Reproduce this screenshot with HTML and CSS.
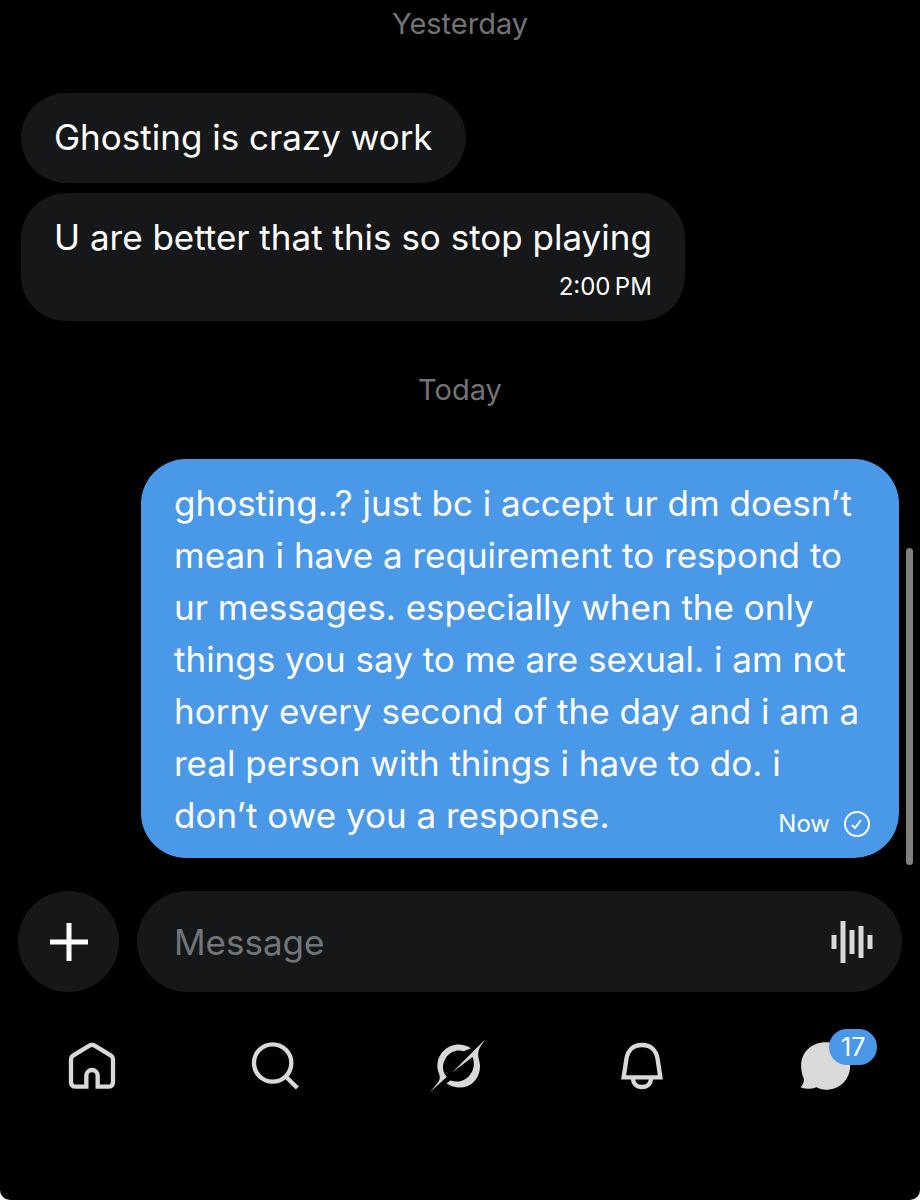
FILE: index.html
```html
<!DOCTYPE html>
<html lang="en">
<head>
    <meta charset="utf-8">
    <meta name="viewport" content="width=device-width, initial-scale=1">
    <title>Messages</title>
    <link rel="stylesheet" href="styles.css">
</head>
<body>
    <div class="app">
        <main class="chat">
            <p class="day">Yesterday</p>
            <div class="message received">
                <p class="text">Ghosting is crazy work</p>
            </div>
            <div class="message received">
                <p class="text">U are better that this so stop playing</p>
                <p class="meta">2:00&#8239;PM</p>
            </div>

            <p class="day">Today</p>
            <div class="message sent">
                <p class="text">ghosting..? just bc i accept ur dm doesn’t mean i have a requirement to respond to ur messages. especially when the only things you say to me are sexual. i am not horny every second of the day and i am a real person with things i have to do. i don’t owe you a response.</p>
                <p class="meta">Now
                    <svg class="check" viewBox="0 0 26 26">
                        <circle cx="13" cy="13" r="12" />
                        <path d="M8 14l3 3 6-8" />
                    </svg>
                </p>
            </div>
            <div class="scroll-thumb"></div>
        </main>

        <form class="composer">
            <button class="add" type="button" aria-label="Add">
                <svg viewBox="0 0 38 38" width="38" height="38"><path d="M19 0v38M0 19h38" stroke="#fff" stroke-width="5" /></svg>
            </button>
            <div class="field">
                <input class="input" type="text" placeholder="Message" aria-label="Message">
                <button class="voice" type="button" aria-label="Voice message">
                    <svg viewBox="0 0 42 42" width="42" height="42"><path d="M3 14v14M12 0v42M21 9v24M30 5v32M39 14v14" stroke="#d9d9d9" stroke-width="5" /></svg>
                </button>
            </div>
        </form>

        <nav class="tabs">
            <a class="tab" href="#" aria-label="Home">
                <svg viewBox="203 516 144 144" width="48" height="48">
                    <path d="M258 650v-33a16 16 0 0 1 34 0v33h31q15 0 15-15v-67q0-7-6-11l-49-30q-8-5-16 0l-49 30q-6 4-6 11v67q0 15 15 15z" />
                </svg>
            </a>
            <a class="tab" href="#" aria-label="Search">
                <svg viewBox="750 515 144 144" width="48" height="48">
                    <circle cx="815" cy="578" r="56" />
                    <path d="M855 619l34 34" />
                </svg>
            </a>
            <a class="tab" href="#" aria-label="Grok">
                <svg viewBox="84 48 176 174" width="58" height="58">
                    <path class="solid" d="M211 81C184 63 149 67 127 90C109 109 105 135 114 157C119 170 117 179 109 188L87 214L138 168C123 152 123 128 136 109C149 90 170 84 190 90Z" />
                    <path class="solid" d="M255 54L155 154L216 108C225 130 219 153 203 168C188 182 166 186 149 179L137 187C164 206 200 205 221 182C236 166 242 143 237 122C232 103 232 94 238 79Z" />
                </svg>
            </a>
            <a class="tab" href="#" aria-label="Notifications">
                <svg viewBox="51 65 144 144" width="48" height="48">
                    <path d="M68 171l8-54c4-28 22-43 47-43s43 15 47 43l8 54zM96 173c0 17 11 27 27 27s27-10 27-27" />
                </svg>
            </a>
            <a class="tab" href="#" aria-label="Messages, 17 unread">
                <svg viewBox="62 93 152 144" width="51" height="48">
                    <path class="solid" d="M139 94c42 0 73 30 73 70 0 41-31 72-73 72-11 0-20-2-28-7-16 6-32 6-48 0 7-7 11-15 10-26-5-11-8-24-8-39 0-40 31-70 74-70z" />
                </svg>
                <span class="badge">17</span>
            </a>
        </nav>
    </div>
</body>
</html>
```
FILE: styles.css
```css
* {
    box-sizing: border-box;
}

html {
    background: #fff;
}

body {
    margin: 0;
    font-family: Inter, "Liberation Sans", sans-serif;
    color: #fff;
}

p {
    margin: 0;
}

button {
    display: flex;
    align-items: center;
    justify-content: center;
    padding: 0;
    border: none;
    cursor: pointer;
}

.app {
    display: flex;
    flex-direction: column;
    min-height: 100vh;
    background: #000;
    border-radius: 0 0 10px 10px;
}

.chat {
    position: relative;
    display: flex;
    flex-direction: column;
    align-items: flex-start;
    gap: 10px;
    padding: 4px 21px 33px;
}

.day {
    align-self: center;
    margin-bottom: 39px;
    font-size: 29px;
    line-height: 40px;
    color: #717376;
}

.message + .day {
    margin-top: 39px;
}

.message {
    padding: 18px 33px 20px;
    border-radius: 45px;
}

.received {
    background: #161719;
}

.sent {
    position: relative;
    align-self: flex-end;
    width: 758px;
    max-width: 100%;
    padding-bottom: 17px;
    background: #4a99e9;
}

.text {
    font-size: 35px;
    line-height: 52px;
}

.meta {
    margin-top: 10px;
    font-size: 24px;
    line-height: 28px;
    text-align: right;
}

.sent .meta {
    position: absolute;
    right: 29px;
    bottom: 20px;
    display: flex;
    align-items: center;
    gap: 14px;
}

.check {
    width: 26px;
    height: 26px;
    fill: none;
    stroke: #fff;
    stroke-width: 2;
}

.scroll-thumb {
    position: absolute;
    right: 7px;
    bottom: 26px;
    width: 7px;
    height: 317px;
    border-radius: 4px;
    background: #808080;
}

.composer {
    display: flex;
    gap: 18px;
    padding: 0 18px;
}

.add {
    flex: none;
    width: 101px;
    height: 101px;
    border-radius: 50%;
    background: #161719;
}

.field {
    flex: 1;
    display: flex;
    align-items: center;
    height: 101px;
    padding: 0 29px 0 37px;
    border-radius: 51px;
    background: #161719;
}

.input {
    flex: 1;
    min-width: 0;
    padding: 0;
    border: none;
    outline: none;
    background: none;
    font-family: inherit;
    font-size: 35px;
    color: #fff;
}

.input::placeholder {
    color: #71767b;
    opacity: 1;
}

.voice {
    background: none;
}

.tabs {
    display: grid;
    grid-template-columns: repeat(5, 1fr);
    padding: 44px 3px 0 0;
}

.tab {
    position: relative;
    display: flex;
    align-items: center;
    justify-content: center;
    height: 60px;
    fill: none;
    stroke: #d9d9d9;
    stroke-width: 13;
    color: #fff;
    text-decoration: none;
}

.solid {
    fill: #d9d9d9;
    stroke: none;
}

.badge {
    position: absolute;
    top: -7px;
    left: calc(50% + 4px);
    width: 48px;
    border-radius: 18px;
    background: #4a99e9;
    font-size: 25px;
    line-height: 36px;
    text-align: center;
}
```
